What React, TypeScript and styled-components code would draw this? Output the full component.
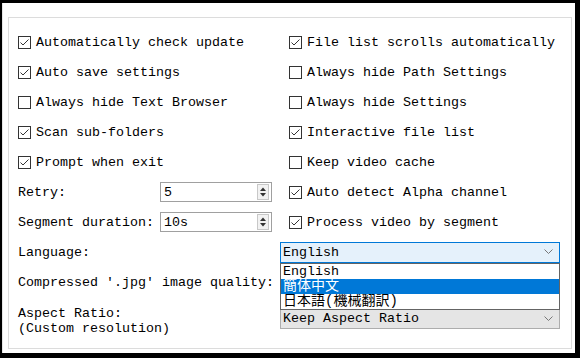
import * as React from 'react';
import styled, { createGlobalStyle } from 'styled-components';

const GlobalStyle = createGlobalStyle`
    html, body {
        margin: 0;
        padding: 0;
        background: #000;
    }
    body {
        width: 580px;
        height: 358px;
        overflow: hidden;
        font-family: "Liberation Mono", "Noto Sans CJK JP", monospace;
        font-size: 13.33px;
        color: #000;
    }
`;

const Frame = styled.div`
    width: 580px;
    height: 358px;
    box-sizing: border-box;
    padding: 3px 5px 5px 2px;
    display: flex;
`;

const Window = styled.div`
    flex: 1;
    background: #fff;
    border-left: 1px solid #e6e6e6;
    box-sizing: border-box;
    padding: 14px 3px 4px 5px;
    display: flex;
`;

const GroupBox = styled.div`
    flex: 1;
    border: 1px solid #dcdcdc;
    box-sizing: border-box;
    padding: 9px 0 0 9px;
    display: grid;
    grid-template-columns: 262px 280px;
    grid-template-rows: repeat(9, 30px) 40px;
    align-content: start;
`;

const Cell = styled.div<{ $indent?: number; $top?: number }>`
    display: flex;
    align-items: ${p => (p.$top !== undefined ? 'flex-start' : 'center')};
    padding-left: ${p => p.$indent || 0}px;
    padding-top: ${p => p.$top || 0}px;
    position: relative;
    white-space: nowrap;
`;

const Label = styled.span`
    line-height: 15px;
`;

const TwoLineLabel = styled.div`
    line-height: 15px;
`;

const Box = styled.span`
    width: 13px;
    height: 13px;
    box-sizing: border-box;
    border: 1px solid #333;
    background: #fff;
    margin-right: 5px;
    flex: none;
    display: flex;
    align-items: center;
    justify-content: center;
`;

const Check = ({ label, checked }: { label: string; checked?: boolean }) => (
    <>
        <Box>
            {checked && (
                <svg width="11" height="11" viewBox="0 0 11 11">
                    <polyline points="1.5,5.5 4,8 9.5,2.5" fill="none" stroke="#333" strokeWidth="1" />
                </svg>
            )}
        </Box>
        <Label>{label}</Label>
    </>
);

const SpinBox = styled.div`
    position: absolute;
    left: 142px;
    top: 5px;
    width: 112px;
    height: 20px;
    box-sizing: border-box;
    border: 1px solid #a0a0a0;
    background: #fff;
    display: flex;
    align-items: center;
    padding-left: 3px;
`;

const SpinText = styled.span`
    flex: 1;
`;

const SpinButtons = styled.div`
    width: 12px;
    height: 16px;
    margin-right: 2px;
    border: 1px solid #c8c8c8;
    box-sizing: border-box;
    background: #f2f2f2;
    display: flex;
    flex-direction: column;
    align-items: center;
    justify-content: space-evenly;
`;

const Spin = ({ value }: { value: string }) => (
    <SpinBox>
        <SpinText>{value}</SpinText>
        <SpinButtons>
            <svg width="6" height="4" viewBox="0 0 6 4"><polygon points="0,4 3,0.5 6,4" fill="#333" /></svg>
            <svg width="6" height="4" viewBox="0 0 6 4"><polygon points="0,0 3,3.5 6,0" fill="#333" /></svg>
        </SpinButtons>
    </SpinBox>
);

const Combo = styled.div<{ $active?: boolean }>`
    width: 280px;
    height: 21px;
    box-sizing: border-box;
    border: 1px solid ${p => (p.$active ? '#0078d7' : '#adadad')};
    background: ${p => (p.$active ? '#e5f1fb' : '#e5e5e5')};
    display: flex;
    align-items: center;
    padding: 0 6px 0 2px;
    position: relative;
`;

const ComboText = styled.span`
    flex: 1;
`;

const Chevron = () => (
    <svg width="9" height="6" viewBox="0 0 9 6">
        <polyline points="0.5,0.5 4.5,4.5 8.5,0.5" fill="none" stroke="#777" strokeWidth="1" />
    </svg>
);

const DropList = styled.div`
    position: absolute;
    left: -1px;
    top: 20px;
    width: 280px;
    box-sizing: border-box;
    border: 1px solid #646464;
    background: #fff;
    z-index: 2;
`;

const DropItem = styled.div<{ $selected?: boolean; $cjk?: boolean }>`
    height: 15px;
    line-height: 15px;
    padding-left: 2px;
    font-size: ${p => (p.$cjk ? '14px' : '13.33px')};
    background: ${p => (p.$selected ? '#0078d7' : '#fff')};
    color: ${p => (p.$selected ? '#fff' : '#000')};
    overflow: hidden;
`;

export default function App() {
    return (
        <Frame>
            <GlobalStyle />
            <Window>
                <GroupBox>
                    <Cell><Check checked label="Automatically check update" /></Cell>
                    <Cell $indent={9}><Check checked label="File list scrolls automatically" /></Cell>
                    <Cell><Check checked label="Auto save settings" /></Cell>
                    <Cell $indent={9}><Check label="Always hide Path Settings" /></Cell>
                    <Cell><Check label="Always hide Text Browser" /></Cell>
                    <Cell $indent={9}><Check label="Always hide Settings" /></Cell>
                    <Cell><Check checked label="Scan sub-folders" /></Cell>
                    <Cell $indent={9}><Check checked label="Interactive file list" /></Cell>
                    <Cell><Check checked label="Prompt when exit" /></Cell>
                    <Cell $indent={9}><Check label="Keep video cache" /></Cell>

                    <Cell><Label>Retry:</Label><Spin value="5" /></Cell>
                    <Cell $indent={9}><Check checked label="Auto detect Alpha channel" /></Cell>
                    <Cell><Label>Segment duration:</Label><Spin value="10s" /></Cell>
                    <Cell $indent={9}><Check checked label="Process video by segment" /></Cell>

                    <Cell><Label>Language:</Label></Cell>
                    <Cell>
                        <Combo $active>
                            <ComboText>English</ComboText>
                            <Chevron />
                            <DropList>
                                <DropItem>English</DropItem>
                                <DropItem $selected $cjk>簡体中文</DropItem>
                                <DropItem $cjk>日本語(機械翻訳)</DropItem>
                            </DropList>
                        </Combo>
                    </Cell>

                    <Cell><Label>Compressed '.jpg' image quality:</Label></Cell>
                    <Cell />

                    <Cell $top={9}>
                        <TwoLineLabel>Aspect Ratio:<br />(Custom resolution)</TwoLineLabel>
                    </Cell>
                    <Cell $top={11}>
                        <Combo>
                            <ComboText>Keep Aspect Ratio</ComboText>
                            <Chevron />
                        </Combo>
                    </Cell>
                </GroupBox>
            </Window>
        </Frame>
    );
}
